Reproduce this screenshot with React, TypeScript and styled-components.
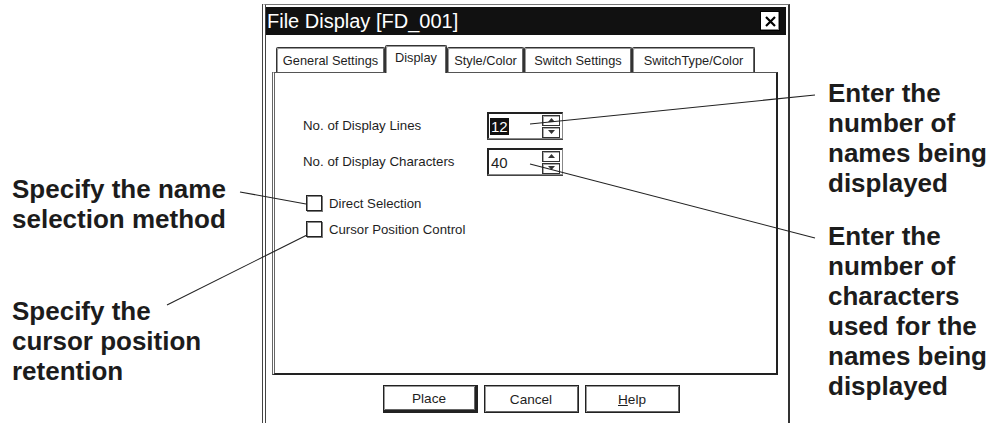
import React from 'react';
import styled, { createGlobalStyle, css } from 'styled-components';

const GlobalStyle = createGlobalStyle`
  body {
    margin: 0;
    background: #fff;
    font-family: "Liberation Sans", Arial, sans-serif;
    color: #1e1e1e;
  }
`;

const Page = styled.div`
  position: relative;
  display: flex;
  width: 1003px;
  height: 423px;
  overflow: hidden;
  background: #fff;
`;

const Notes = styled.div<{ $side: 'left' | 'right' }>`
  flex-shrink: 0;
  display: flex;
  flex-direction: column;
  font-size: 26px;
  font-weight: bold;
  line-height: 30px;
  color: #1c1c1c;
  ${({ $side }) =>
    $side === 'left'
      ? css`
          width: 250px;
          padding: 174px 0 0 12px;
          gap: 62px;
        `
      : css`
          padding: 78px 0 0 38px;
          gap: 23px;
        `}
`;

const Note = styled.div`
  white-space: pre-line;
`;

const Window = styled.div`
  flex-shrink: 0;
  box-sizing: border-box;
  width: 528px;
  height: 440px;
  margin-top: 4px;
  border-left: 4px double #444;
  border-top: 1px solid #777;
  border-right: 2px solid #333;
  background: #fff;
`;

const TitleBar = styled.div`
  display: flex;
  align-items: center;
  justify-content: space-between;
  height: 28px;
  margin: 2px 2px 0 0;
  padding: 0 6px 0 1px;
  background: #111;
`;

const Title = styled.span`
  color: #fff;
  font-size: 20px;
`;

const CloseBox = styled.div`
  display: flex;
  align-items: center;
  justify-content: center;
  width: 18px;
  height: 18px;
  background: #fff;
  border: 1px solid #000;
  box-shadow: inset -1px -1px #888;
`;

const Body = styled.div`
  padding: 10px 0 0 6px;
`;

const TabRow = styled.div`
  display: flex;
  align-items: flex-end;
  height: 27px;
  margin-left: 4px;
  position: relative;
  z-index: 1;
`;

const Tab = styled.div<{ $w: number; $active?: boolean }>`
  box-sizing: border-box;
  width: ${({ $w }) => $w}px;
  height: ${({ $active }) => ($active ? 28 : 25)}px;
  display: flex;
  align-items: center;
  justify-content: center;
  font-size: 12.8px;
  background: #fff;
  border: 1px solid #333;
  border-bottom: none;
  border-radius: 2px 2px 0 0;
  box-shadow: inset 1px 1px #999, inset -1px 0 #666;
  ${({ $active }) =>
    $active
      ? css`
          margin-bottom: -1px;
          padding-bottom: 4px;
        `
      : css`
          padding-top: 1px;
        `}
`;

const Panel = styled.div`
  box-sizing: border-box;
  width: 506px;
  height: 303px;
  border-top: 1px solid #555;
  border-left: 3px double #666;
  border-right: 2px solid #222;
  border-bottom: 2px solid #222;
  padding: 39px 0 0 28px;
`;

const FieldRow = styled.div<{ $gap?: number }>`
  display: flex;
  align-items: center;
  height: 27px;
  margin-top: ${({ $gap }) => $gap ?? 0}px;
  font-size: 13.3px;
`;

const Label = styled.span`
  width: 184px;
`;

const SpinBox = styled.div`
  box-sizing: border-box;
  display: flex;
  align-items: center;
  width: 76px;
  height: 27px;
  border-top: 2px solid #222;
  border-left: 2px solid #222;
  border-right: 1px solid #888;
  border-bottom: 1px solid #888;
  box-shadow: 0 1px #444;
  padding: 0 2px 0 1px;
`;

const Value = styled.span<{ $selected?: boolean }>`
  flex: 1;
  font-size: 15px;
  span {
    padding: 0 1px;
    ${({ $selected }) =>
      $selected &&
      css`
        background: #111;
        color: #fff;
      `}
  }
`;

const Spinner = styled.div`
  display: flex;
  flex-direction: column;
  gap: 1px;
`;

const SpinButton = styled.div`
  box-sizing: border-box;
  display: flex;
  align-items: center;
  justify-content: center;
  width: 18px;
  height: 11px;
  border: 1px solid #333;
  box-shadow: inset 1px 1px #aaa;
`;

const CheckRow = styled.div<{ $gap: number }>`
  display: flex;
  align-items: center;
  gap: 7px;
  height: 16px;
  margin: ${({ $gap }) => $gap}px 0 0 3px;
  font-size: 13.2px;
`;

const Box = styled.div`
  box-sizing: border-box;
  width: 16px;
  height: 16px;
  border: 1px solid #222;
  box-shadow: inset 1px 1px #888, 1px 1px #777;
`;

const ButtonRow = styled.div`
  display: flex;
  justify-content: center;
  gap: 6px;
  margin-top: 10px;
  padding-left: 12px;
  width: 506px;
  box-sizing: border-box;
`;

const Button = styled.div<{ $default?: boolean }>`
  box-sizing: border-box;
  width: 95px;
  height: 28px;
  display: flex;
  align-items: center;
  justify-content: center;
  font-size: 13.6px;
  border: 1px solid #222;
  box-shadow: inset 1px 1px #999, inset -1px -1px #666;
  ${({ $default }) =>
    $default &&
    css`
      border-right-width: 3px;
      border-bottom-width: 3px;
    `}
  u {
    text-decoration-thickness: 1px;
  }
`;

const Leaders = styled.svg`
  position: absolute;
  inset: 0;
  pointer-events: none;
`;

const Arrow = ({ up }: { up?: boolean }) => (
  <svg width="7" height="4" viewBox="0 0 7 4">
    <path d={up ? 'M0 4 L3.5 0 L7 4 Z' : 'M0 0 L3.5 4 L7 0 Z'} fill="#333" />
  </svg>
);

const tabs = [
  { label: 'General Settings', w: 109 },
  { label: 'Display', w: 62, active: true },
  { label: 'Style/Color', w: 77 },
  { label: 'Switch Settings', w: 108 },
  { label: 'SwitchType/Color', w: 123 },
];

const App: React.FC = () => (
  <>
    <GlobalStyle />
    <Page>
      <Notes $side="left">
        <Note>{'Specify the name\nselection method'}</Note>
        <Note>{'Specify the\ncursor position\nretention'}</Note>
      </Notes>

      <Window>
        <TitleBar>
          <Title>File Display [FD_001]</Title>
          <CloseBox>
            <svg width="11" height="11" viewBox="0 0 11 11">
              <path d="M1 1 L10 10 M10 1 L1 10" stroke="#000" strokeWidth="2.2" />
            </svg>
          </CloseBox>
        </TitleBar>
        <Body>
          <TabRow>
            {tabs.map((t) => (
              <Tab key={t.label} $w={t.w} $active={t.active}>
                {t.label}
              </Tab>
            ))}
          </TabRow>
          <Panel>
            <FieldRow>
              <Label>No. of Display Lines</Label>
              <SpinBox>
                <Value $selected>
                  <span>12</span>
                </Value>
                <Spinner>
                  <SpinButton>
                    <Arrow up />
                  </SpinButton>
                  <SpinButton>
                    <Arrow />
                  </SpinButton>
                </Spinner>
              </SpinBox>
            </FieldRow>
            <FieldRow $gap={9}>
              <Label>No. of Display Characters</Label>
              <SpinBox>
                <Value>
                  <span>40</span>
                </Value>
                <Spinner>
                  <SpinButton>
                    <Arrow up />
                  </SpinButton>
                  <SpinButton>
                    <Arrow />
                  </SpinButton>
                </Spinner>
              </SpinBox>
            </FieldRow>
            <CheckRow $gap={20}>
              <Box />
              Direct Selection
            </CheckRow>
            <CheckRow $gap={10}>
              <Box />
              Cursor Position Control
            </CheckRow>
          </Panel>
          <ButtonRow>
            <Button $default>Place</Button>
            <Button>Cancel</Button>
            <Button>
              <span>
                <u>H</u>elp
              </span>
            </Button>
          </ButtonRow>
        </Body>
      </Window>

      <Notes $side="right">
        <Note>{'Enter the\nnumber of\nnames being\ndisplayed'}</Note>
        <Note>{'Enter the\nnumber of\ncharacters\nused for the\nnames being\ndisplayed'}</Note>
      </Notes>

      <Leaders width="1003" height="423" viewBox="0 0 1003 423">
        <g stroke="#222" strokeWidth="1.1">
          <line x1="240" y1="192" x2="306" y2="204" />
          <line x1="167" y1="305" x2="307" y2="235" />
          <line x1="530" y1="124" x2="815" y2="95" />
          <line x1="530" y1="164" x2="815" y2="238" />
        </g>
      </Leaders>
    </Page>
  </>
);

export default App;
